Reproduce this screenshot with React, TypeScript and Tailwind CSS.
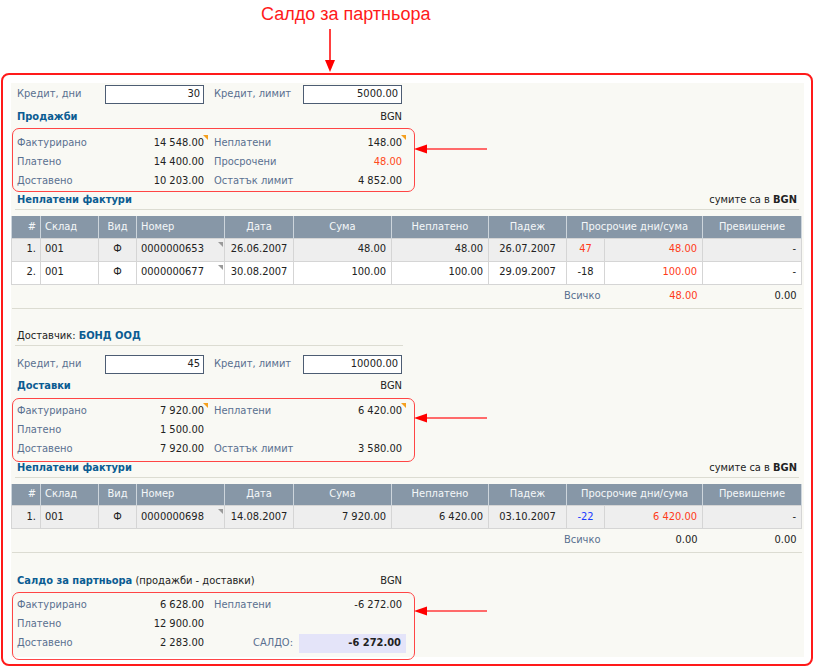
import React from 'react';

const LABEL = 'text-[#5a7090]';

type Pair = {
  label: string;
  value: string;
  valueCls?: string;
  corner?: boolean;
};

type SummaryRow = { left: Pair; right?: Pair; saldo?: string };

const Corner = () => (
  <span className="absolute right-0 top-[1px] h-0 w-0 border-l-[5px] border-t-[5px] border-l-transparent border-t-[#f5a01e]" />
);

const GrayCorner = () => (
  <span className="absolute right-[1px] top-[3px] h-0 w-0 border-l-[5px] border-t-[5px] border-l-transparent border-t-[#9a9a9a]" />
);

const PairCells: React.FC<{ p?: Pair; w: string }> = ({ p, w }) => (
  <div className={`flex h-[19px] items-center ${w}`}>
    {p && (
      <>
        <span className={`flex-1 ${LABEL}`}>{p.label}</span>
        <span className={`relative flex h-full items-center pr-[4px] ${p.valueCls ?? 'text-[#222]'}`}>
          {p.value}
          {p.corner && <Corner />}
        </span>
      </>
    )}
  </div>
);

const Arrow = () => (
  <svg width="74" height="10" viewBox="0 0 74 10" className="block">
    <line x1="10" y1="5" x2="73" y2="5" stroke="#ff6a6a" strokeWidth="2" />
    <polygon points="0,5 13,0.5 13,9.5" fill="#ff0000" />
  </svg>
);

const Summary: React.FC<{
  rows: SummaryRow[];
  top: string;
  bottom: string;
  arrowTop: string;
  className?: string;
}> = ({ rows, top, bottom, arrowTop, className }) => (
  <div className={`relative ml-[6px] w-[389px] ${className ?? ''}`}>
    <div className={`pointer-events-none absolute left-[-5px] w-[403px] rounded-[7px] border-[1.5px] border-[#ff4545] ${top} ${bottom}`} />
    <div className={`absolute left-[397px] ${arrowTop}`}>
      <Arrow />
    </div>
    {rows.map((r, i) => (
      <div key={i} className="flex gap-[6px]">
        <PairCells p={r.left} w="w-[191px]" />
        {r.saldo ? (
          <div className="flex h-[19px] w-[192px] items-center">
            <span className={`w-[85px] pr-[6px] text-right ${LABEL}`}>САЛДО:</span>
            <span className="flex h-full flex-1 items-center justify-end bg-[#e4e4f9] pr-[5px] font-bold text-[#222]">
              {r.saldo}
            </span>
          </div>
        ) : (
          <PairCells p={r.right} w="w-[192px]" />
        )}
      </div>
    ))}
  </div>
);

const CreditRow: React.FC<{ days: string; limit: string; className?: string }> = ({ days, limit, className }) => (
  <div className={`ml-[6px] flex h-[19px] items-center gap-[10px] ${className ?? ''}`}>
    <div className="flex items-center">
      <span className={`w-[88px] ${LABEL}`}>Кредит, дни</span>
      <div className="flex h-[19px] w-[99px] items-center justify-end border border-[#4d5d73] bg-white pr-[3px] text-[#222]">
        {days}
      </div>
    </div>
    <div className="flex items-center">
      <span className={`w-[89px] ${LABEL}`}>Кредит, лимит</span>
      <div className="flex h-[19px] w-[99px] items-center justify-end border border-[#4d5d73] bg-white pr-[3px] text-[#222]">
        {limit}
      </div>
    </div>
  </div>
);

const SectionTitle: React.FC<{ children: React.ReactNode; className?: string }> = ({ children, className }) => (
  <div className={`ml-[6px] flex h-[18px] w-[389px] items-center justify-between pr-[4px] ${className ?? ''}`}>
    <span>{children}</span>
    <span className="text-[#222]">BGN</span>
  </div>
);

const InvoicesTitle: React.FC<{ className?: string }> = ({ className }) => (
  <div className={`ml-[4px] flex h-[17px] w-[784px] items-center justify-between border-b border-[#dcdcd2] pb-[1px] pl-[2px] pr-[2px] ${className ?? ''}`}>
    <span className="font-bold text-[#0b5c92]">Неплатени фактури</span>
    <span className="text-[#222]">
      сумите са в <b>BGN</b>
    </span>
  </div>
);

type Inv = {
  n: string;
  num: string;
  date: string;
  sum: string;
  unpaid: string;
  due: string;
  days: string;
  daysCls: string;
  over: string;
  bg: string;
};

const TH = 'border-x border-[#cdd5dc] font-normal text-[#f5f7f9]';
const TD = 'border border-[#d5d5d5] px-[4px]';

const Invoices: React.FC<{ rows: Inv[]; totalOver: string; totalOverCls: string; className?: string }> = ({
  rows,
  totalOver,
  totalOverCls,
  className,
}) => (
  <table className={`w-[790px] table-fixed border-collapse text-[#222] ${className ?? ''}`}>
    <colgroup>
      <col className="w-[29px]" />
      <col className="w-[58px]" />
      <col className="w-[38px]" />
      <col className="w-[88px]" />
      <col className="w-[69px]" />
      <col className="w-[98px]" />
      <col className="w-[97px]" />
      <col className="w-[78px]" />
      <col className="w-[38px]" />
      <col className="w-[98px]" />
      <col className="w-[99px]" />
    </colgroup>
    <thead>
      <tr className="h-[22px] bg-[#8797a7]">
        <th className={`${TH} pr-[4px] text-right`}>#</th>
        <th className={`${TH} pl-[4px] text-left`}>Склад</th>
        <th className={`${TH} text-center`}>Вид</th>
        <th className={`${TH} pl-[4px] text-left`}>Номер</th>
        <th className={`${TH} text-center`}>Дата</th>
        <th className={`${TH} text-center`}>Сума</th>
        <th className={`${TH} text-center`}>Неплатено</th>
        <th className={`${TH} text-center`}>Падеж</th>
        <th colSpan={2} className={`${TH} text-center`}>
          Просрочие дни/сума
        </th>
        <th className={`${TH} text-center`}>Превишение</th>
      </tr>
    </thead>
    <tbody>
      {rows.map((r) => (
        <tr key={r.n} className={`h-[23px] ${r.bg}`}>
          <td className={`${TD} text-right`}>{r.n}</td>
          <td className={`${TD} text-left`}>001</td>
          <td className={`${TD} text-center`}>Ф</td>
          <td className={`${TD} relative text-left`}>
            {r.num}
            <GrayCorner />
          </td>
          <td className={`${TD} text-center`}>{r.date}</td>
          <td className={`${TD} pr-[5px] text-right`}>{r.sum}</td>
          <td className={`${TD} pr-[5px] text-right`}>{r.unpaid}</td>
          <td className={`${TD} text-center`}>{r.due}</td>
          <td className={`${TD} text-center ${r.daysCls}`}>{r.days}</td>
          <td className={`${TD} pr-[5px] text-right text-[#ff3b1a]`}>{r.over}</td>
          <td className={`${TD} pr-[5px] text-right`}>-</td>
        </tr>
      ))}
      <tr className="h-[24px] border-b border-[#dcdcd2]">
        <td colSpan={9} className={`pr-[4px] text-right ${LABEL}`}>
          Всичко
        </td>
        <td className={`pr-[5px] text-right ${totalOverCls}`}>{totalOver}</td>
        <td className="pr-[5px] text-right">0.00</td>
      </tr>
    </tbody>
  </table>
);

const App: React.FC = () => (
  <div className="h-[668px] w-[815px] bg-white text-[11px] font-['DejaVu_Sans_Condensed','DejaVu_Sans',sans-serif]">
    {/* annotation title */}
    <div className="relative h-[73px]">
      <div className="absolute left-[261px] top-[3px] font-['Liberation_Sans',sans-serif] text-[18px] leading-[22px] text-[#ff1a1a]">
        Салдо за партньора
      </div>
      <svg width="12" height="44" viewBox="0 0 12 44" className="absolute left-[324px] top-[29px]">
        <line x1="6" y1="0" x2="6" y2="33" stroke="#ff4040" strokeWidth="2" />
        <polygon points="6,43 1,31 11,31" fill="#ff0000" />
      </svg>
    </div>

    <div className="ml-[1px] flex h-[593px] w-[812px] rounded-[8px] border-2 border-[#ff1a1a] pb-[7px] pl-[8px] pr-[7px] pt-[8px]">
      <div className="flex-1 bg-[#f9f9f4] pt-[2px]">
        <CreditRow days="30" limit="5000.00" />
        <SectionTitle className="mt-[4px]">
          <span className="font-bold text-[#0b5c92]">Продажби</span>
        </SectionTitle>
        <Summary
          className="mt-[8px]"
          top="top-[-6px]"
          bottom="bottom-[-1px]"
          arrowTop="top-[10px]"
          rows={[
            {
              left: { label: 'Фактурирано', value: '14 548.00', corner: true },
              right: { label: 'Неплатени', value: '148.00', corner: true },
            },
            {
              left: { label: 'Платено', value: '14 400.00' },
              right: { label: 'Просрочени', value: '48.00', valueCls: 'text-[#ff4a1a]' },
            },
            {
              left: { label: 'Доставено', value: '10 203.00' },
              right: { label: 'Остатък лимит', value: '4 852.00' },
            },
          ]}
        />
        <InvoicesTitle className="mt-[2px]" />
        <Invoices
          className="mt-[6px]"
          totalOver="48.00"
          totalOverCls="text-[#ff3b1a]"
          rows={[
            {
              n: '1.',
              num: '0000000653',
              date: '26.06.2007',
              sum: '48.00',
              unpaid: '48.00',
              due: '26.07.2007',
              days: '47',
              daysCls: 'text-[#ff3b1a]',
              over: '48.00',
              bg: 'bg-[#eeeeee]',
            },
            {
              n: '2.',
              num: '0000000677',
              date: '30.08.2007',
              sum: '100.00',
              unpaid: '100.00',
              due: '29.09.2007',
              days: '-18',
              daysCls: 'text-[#222]',
              over: '100.00',
              bg: 'bg-white',
            },
          ]}
        />

        <div className="ml-[4px] mt-[20px] flex h-[17px] w-[388px] items-center border-b border-[#dcdcd2] pl-[2px] text-[#222]">
          Доставчик:&nbsp;<span className="font-bold text-[#0b5c92]">БОНД ООД</span>
        </div>
        <CreditRow className="mt-[9px]" days="45" limit="10000.00" />
        <SectionTitle className="mt-[4px]">
          <span className="font-bold text-[#0b5c92]">Доставки</span>
        </SectionTitle>
        <Summary
          className="mt-[6px]"
          top="top-[-4px]"
          bottom="bottom-[-3px]"
          arrowTop="top-[11px]"
          rows={[
            {
              left: { label: 'Фактурирано', value: '7 920.00', corner: true },
              right: { label: 'Неплатени', value: '6 420.00', corner: true },
            },
            { left: { label: 'Платено', value: '1 500.00' } },
            {
              left: { label: 'Доставено', value: '7 920.00' },
              right: { label: 'Остатък лимит', value: '3 580.00' },
            },
          ]}
        />
        <InvoicesTitle className="mt-[2px]" />
        <Invoices
          className="mt-[6px]"
          totalOver="0.00"
          totalOverCls="text-[#222]"
          rows={[
            {
              n: '1.',
              num: '0000000698',
              date: '14.08.2007',
              sum: '7 920.00',
              unpaid: '6 420.00',
              due: '03.10.2007',
              days: '-22',
              daysCls: 'text-[#1a3cff]',
              over: '6 420.00',
              bg: 'bg-[#eeeeee]',
            },
          ]}
        />

        <SectionTitle className="mt-[19px]">
          <span className="font-bold text-[#0b5c92]">Салдо за партньора</span>
          <span className="text-[#222]"> (продажби - доставки)</span>
        </SectionTitle>
        <Summary
          className="mt-[6px]"
          top="top-[-4px]"
          bottom="bottom-[-7px]"
          arrowTop="top-[10px]"
          rows={[
            {
              left: { label: 'Фактурирано', value: '6 628.00' },
              right: { label: 'Неплатени', value: '-6 272.00' },
            },
            { left: { label: 'Платено', value: '12 900.00' } },
            { left: { label: 'Доставено', value: '2 283.00' }, saldo: '-6 272.00' },
          ]}
        />
      </div>
    </div>
  </div>
);

export default App;
